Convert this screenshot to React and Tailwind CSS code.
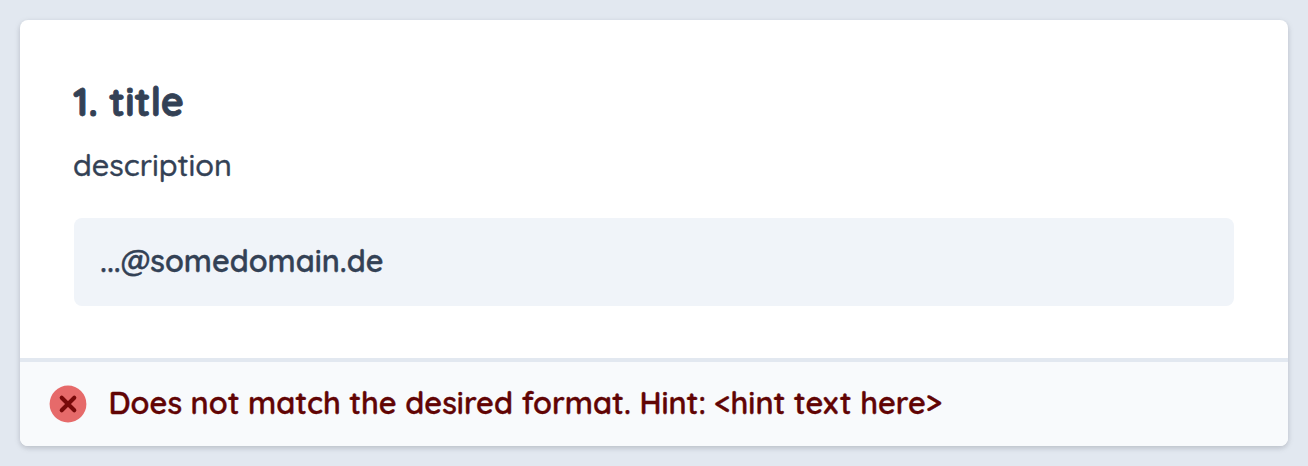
export default function App() {
  return (
    <div className="h-[466px] w-[1308px] overflow-hidden bg-[#e2e8f0] p-5 font-['Quicksand','Lato',sans-serif] text-[#334155]">
      <main className="flex h-[426px] flex-col overflow-hidden rounded-lg bg-white shadow-[0_2px_6px_rgba(20,20,40,0.13),0_2px_4px_rgba(20,20,40,0.08)]">
        <section className="h-[338px] px-[54px] pt-[54px]">
          <h1 className="-ml-px h-14 whitespace-nowrap text-[39.3px] font-bold leading-[56px] [-webkit-text-stroke:0.8px_currentColor]">1. title</h1>
          <p className="-ml-px mt-3 h-12 whitespace-nowrap text-[30.6px] font-medium leading-[46px] [-webkit-text-stroke:0.4px_currentColor]">description</p>
          <div className="mt-7 flex h-[88px] items-center rounded-lg bg-[#f0f4f9] px-[26px] pb-[3px] text-[30.6px] font-semibold [-webkit-text-stroke:0.4px_currentColor]">...@somedomain.de</div>
        </section>
        <footer className="flex h-[88px] items-center border-t-4 border-[#e2e8f0] bg-[#f8fafc] pl-[29px] text-[#610404]">
          <svg width="38" height="38" viewBox="0 0 38 38"><circle cx="19" cy="19" r="18.4" fill="#e66a6a"/><path d="m12.7 12.7 12.6 12.6m0-12.6L12.7 25.3" stroke="#780a0a" strokeWidth="4.1" strokeLinecap="round"/></svg>
          <span className="ml-[21.4px] whitespace-nowrap pb-px text-[30.7px] font-semibold [-webkit-text-stroke:0.4px_currentColor]">Does not match the desired format. Hint: &lt;hint text here&gt;</span>
        </footer>
      </main>
    </div>
  );
}
